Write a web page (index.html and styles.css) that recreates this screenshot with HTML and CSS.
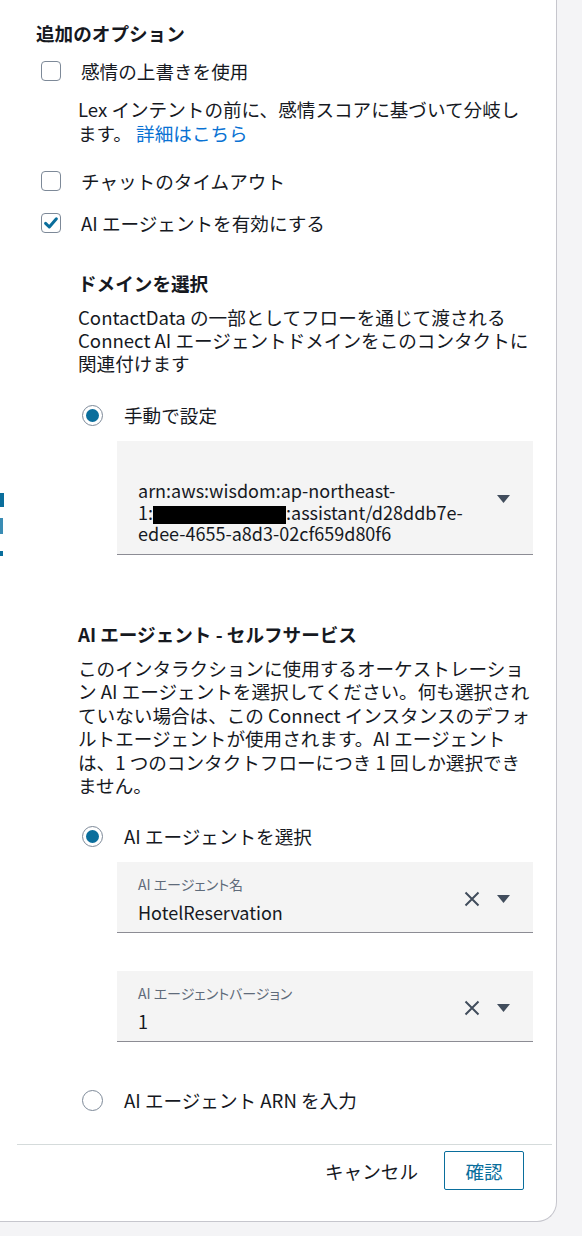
FILE: index.html
```html
<!DOCTYPE html>
<html lang="ja">
<head>
<meta charset="utf-8">
<title>追加のオプション</title>
<link rel="stylesheet" href="styles.css">
</head>
<body>
<div class="panel">
  <div class="edge-bits">
    <span class="bit bit-a"></span>
    <span class="bit bit-b"></span>
    <span class="bit bit-c"></span>
  </div>

  <h1 class="title">追加のオプション</h1>

  <div class="check-row first">
    <span class="checkbox"></span>
    <span class="check-label">感情の上書きを使用</span>
  </div>
  <p class="check-desc">Lex インテントの前に、感情スコアに基づいて分岐し<br>ます。 <a class="link" href="#">詳細はこちら</a></p>

  <div class="check-row second">
    <span class="checkbox"></span>
    <span class="check-label">チャットのタイムアウト</span>
  </div>

  <div class="check-row third">
    <span class="checkbox checked">
      <svg viewBox="0 0 20 20" width="20" height="20"><path d="M4.6 10.4 L8.3 14 L15.4 5.8" fill="none" stroke="currentColor" stroke-width="3" stroke-linecap="round" stroke-linejoin="round"/></svg>
    </span>
    <span class="check-label">AI エージェントを有効にする</span>
  </div>

  <div class="nested">
    <h2 class="sub-title domain-title">ドメインを選択</h2>
    <p class="desc">ContactData の一部としてフローを通じて渡される<br>Connect AI エージェントドメインをこのコンタクトに<br>関連付けます</p>

    <div class="radio-row radio-domain">
      <span class="radio selected"></span>
      <span class="radio-label">手動で設定</span>
    </div>

    <div class="field field-domain">
      <div class="field-text">
        <div class="field-label"></div>
        <div class="field-value"><span class="vline">arn:aws:wisdom:ap-northeast-</span><span class="vline">1:<span class="redact"></span>:assistant/d28ddb7e-</span><span class="vline">edee-4655-a8d3-02cf659d80f6</span></div>
      </div>
      <div class="field-icons">
        <svg class="caret" viewBox="0 0 13 8" width="13" height="8"><path d="M0 0 H13 L6.5 8 Z" fill="currentColor"/></svg>
      </div>
    </div>

    <h2 class="sub-title agent-title">AI エージェント - セルフサービス</h2>
    <p class="desc agent-desc">このインタラクションに使用するオーケストレーショ<br>ン AI エージェントを選択してください。何も選択され<br>ていない場合は、この Connect インスタンスのデフォ<br>ルトエージェントが使用されます。AI エージェント<br>は、1 つのコンタクトフローにつき 1 回しか選択でき<br>ません。</p>

    <div class="radio-row radio-agent">
      <span class="radio selected"></span>
      <span class="radio-label">AI エージェントを選択</span>
    </div>

    <div class="field field-name">
      <div class="field-text">
        <div class="field-label">AI エージェント名</div>
        <div class="field-value">HotelReservation</div>
      </div>
      <div class="field-icons">
        <svg class="clear" viewBox="0 0 16 16" width="16" height="16"><path d="M1.5 1.5 L14.5 14.5 M14.5 1.5 L1.5 14.5" fill="none" stroke="currentColor" stroke-width="2"/></svg>
        <svg class="caret" viewBox="0 0 13 8" width="13" height="8"><path d="M0 0 H13 L6.5 8 Z" fill="currentColor"/></svg>
      </div>
    </div>

    <div class="field field-version">
      <div class="field-text">
        <div class="field-label">AI エージェントバージョン</div>
        <div class="field-value">1</div>
      </div>
      <div class="field-icons">
        <svg class="clear" viewBox="0 0 16 16" width="16" height="16"><path d="M1.5 1.5 L14.5 14.5 M14.5 1.5 L1.5 14.5" fill="none" stroke="currentColor" stroke-width="2"/></svg>
        <svg class="caret" viewBox="0 0 13 8" width="13" height="8"><path d="M0 0 H13 L6.5 8 Z" fill="currentColor"/></svg>
      </div>
    </div>

    <div class="radio-row radio-arn">
      <span class="radio"></span>
      <span class="radio-label">AI エージェント ARN を入力</span>
    </div>
  </div>

  <div class="footer">
    <button class="btn-cancel" type="button">キャンセル</button>
    <button class="btn-confirm" type="button">確認</button>
  </div>
</div>
</body>
</html>
```

FILE: styles.css
```css
html, body {
  margin: 0;
  padding: 0;
}

body {
  background: #f4f4f6;
  font-family: "Noto Sans CJK JP", "Noto Sans", sans-serif;
  color: #16191f;
  font-size: 18.6px;
  line-height: 24px;
}

.panel {
  position: relative;
  box-sizing: border-box;
  width: 557px;
  height: 1222px;
  background: #ffffff;
  border-right: 1px solid #c6c6cd;
  border-bottom: 1px solid #c6c6cd;
  border-bottom-right-radius: 20px;
  padding: 21px 0 0 36px;
}

.edge-bits .bit {
  position: absolute;
  left: 0;
  display: block;
  background: #0a6e9c;
}
.bit-a { top: 493px; width: 4px; height: 14px; }
.bit-b { top: 518px; width: 3px; height: 16px; background: #3a8cb4 !important; }
.bit-c { top: 551px; width: 3px; height: 5px; }

.title {
  margin: 0;
  font-size: 18.6px;
  line-height: 24px;
  font-weight: 700;
  color: #16191f;
}

.check-row {
  display: flex;
  align-items: center;
  margin-left: 5px;
  height: 24px;
}
.check-row.first { margin-top: 14px; }
.check-row.second { margin-top: 24px; }
.check-row.third { margin-top: 18px; }

.checkbox {
  box-sizing: border-box;
  width: 20px;
  height: 20px;
  border: 1px solid #7d8998;
  border-radius: 4px;
  background: #fff;
  display: flex;
  align-items: center;
  justify-content: center;
  flex: none;
  color: #0a6e9c;
}
.checkbox svg {
  display: block;
  flex: none;
}

.check-label {
  margin-left: 20px;
  color: #16191f;
}

.check-desc {
  margin: 14px 0 0 42px;
  line-height: 24px;
  color: #16191f;
}

.link {
  color: #0972d3;
  text-decoration: none;
}

.nested {
  margin-left: 42px;
  width: 455px;
}

.sub-title {
  margin: 0;
  font-size: 18.6px;
  line-height: 24px;
  font-weight: 700;
  color: #16191f;
}
.domain-title { margin-top: 36px; }
.agent-title { margin-top: 67px; }

.desc {
  margin: 10px 0 0 0;
  line-height: 23px;
  color: #16191f;
  white-space: nowrap;
}
.agent-desc {
  line-height: 23.6px;
}

.radio-row {
  display: flex;
  align-items: center;
  height: 24px;
  margin-left: 4px;
}
.radio-domain { margin-top: 29px; }
.radio-agent { margin-top: 27px; }
.radio-arn { margin-top: 46px; }

.radio {
  box-sizing: border-box;
  width: 21px;
  height: 21px;
  border: 1px solid #7d8998;
  border-radius: 50%;
  background: #fff;
  flex: none;
  display: flex;
  align-items: center;
  justify-content: center;
}
.radio.selected::after {
  content: "";
  width: 13px;
  height: 13px;
  border-radius: 50%;
  background: #0a6e9c;
}

.radio-label {
  margin-left: 21px;
  color: #16191f;
}

.field {
  display: flex;
  align-items: center;
  box-sizing: border-box;
  margin-left: 39px;
  width: 416px;
  background: #f4f4f4;
  border-bottom: 1.5px solid #8c8c94;
  padding: 12px 23px 9px 21px;
}
.field-domain { margin-top: 14px; }
.field-name { margin-top: 14px; }
.field-version { margin-top: 38px; }

.field-text {
  flex: 1;
  min-width: 0;
}
.field-label {
  height: 20px;
  font-size: 14px;
  line-height: 20px;
  color: #5f6b7a;
  font-feature-settings: "palt";
}
.field-value {
  margin-top: 7px;
  font-size: 18px;
  line-height: 22px;
  color: #16191f;
  white-space: nowrap;
}
.vline {
  display: block;
  height: 21.5px;
  line-height: 21.5px;
}

.redact {
  display: inline-block;
  width: 133px;
  height: 18px;
  background: #000;
  vertical-align: -4px;
}

.field-icons {
  display: flex;
  align-items: center;
  gap: 17px;
  color: #414d5c;
  flex: none;
}
.field-icons svg {
  display: block;
}

.footer {
  margin: 32px 0 0 -19px;
  width: 535px;
  border-top: 1px solid #d5dbdb;
  padding-top: 6px;
  display: flex;
  justify-content: flex-end;
  align-items: center;
  padding-right: 28px;
  box-sizing: border-box;
}

.btn-cancel {
  font-family: inherit;
  font-size: 18.6px;
  line-height: 24px;
  background: none;
  border: none;
  padding: 0;
  color: #16191f;
  margin-right: 26px;
}

.btn-confirm {
  box-sizing: border-box;
  width: 80px;
  height: 39px;
  font-family: inherit;
  font-size: 18.6px;
  line-height: 24px;
  background: #fff;
  border: 1px solid #0a6e9c;
  border-radius: 2px;
  color: #0a6e9c;
  padding: 0;
}
```
